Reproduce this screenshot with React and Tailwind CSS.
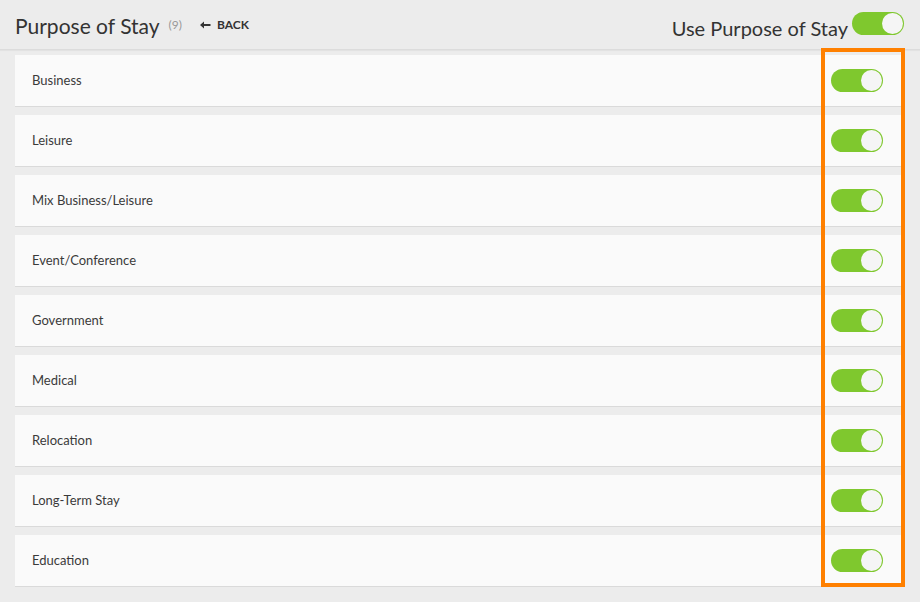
import React from "react";

const items = [
  "Business",
  "Leisure",
  "Mix Business/Leisure",
  "Event/Conference",
  "Government",
  "Medical",
  "Relocation",
  "Long-Term Stay",
  "Education",
];

function Toggle() {
  return (
    <div className="w-[52px] h-[23px] rounded-full bg-[#7fc82e] flex items-center justify-end pr-[1px]">
      <div className="w-[21px] h-[21px] rounded-full bg-[#f5f5f5]" />
    </div>
  );
}

export default function App() {
  return (
    <div
      className="w-[920px] h-[602px] bg-[#ececec] overflow-hidden flex flex-col"
      style={{ fontFamily: "Lato, 'Open Sans', sans-serif" }}
    >
      <div className="h-[50px] shrink-0 flex items-center pl-[15px] pr-[16px] border-b border-[#dcdcdc] shadow-[0_1px_1px_rgba(0,0,0,0.04)]">
        <span className="text-[21px] text-[#333] leading-none pt-[1px]">Purpose of Stay</span>
        <span className="text-[12px] text-[#999] ml-[9px] leading-none">(9)</span>
        <span className="ml-[18px] flex items-center text-[12px] font-bold text-[#333] leading-none">
          <svg width="11" height="8" viewBox="0 0 11 8" className="mr-[6px]">
            <path d="M0 4 L4 0.5 L4 3 L10.5 3 L10.5 5 L4 5 L4 7.5 Z" fill="#333" />
          </svg>
          BACK
        </span>
        <div className="flex-1" />
        <span className="text-[20px] text-[#333] leading-none mt-[6px] mr-[4px]">Use Purpose of Stay</span>
        <div className="-mt-[3px]">
          <Toggle />
        </div>
      </div>
      <div className="relative flex flex-col gap-[8px] px-[15px] pt-[5px]">
        {items.map((t) => (
          <div
            key={t}
            className="h-[52px] bg-[#fafafa] border-b border-[#dadada] flex items-center pl-[17px] pr-[22px]"
          >
            <span className="text-[13px] text-[#3a3a3a] flex-1">{t}</span>
            <Toggle />
          </div>
        ))}
        <div className="absolute left-[821px] top-[-2px] w-[84px] h-[539px] border-[4px] border-[#ff8000]" />
      </div>
    </div>
  );
}
